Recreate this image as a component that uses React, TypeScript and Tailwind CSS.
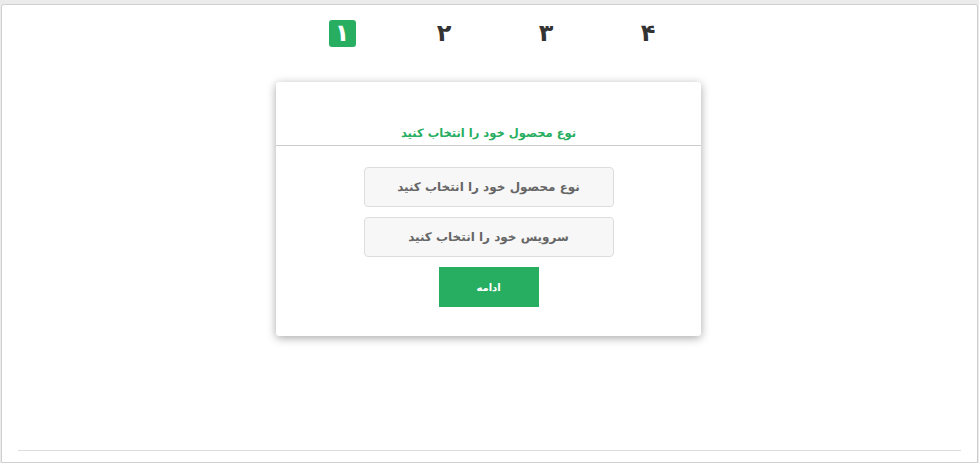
import React from 'react';

const steps = ['۱', '۲', '۳', '۴'];

const fa = { fontFamily: '"DejaVu Sans", "Noto Sans", sans-serif' };

export default function App() {
  return (
    <div className="min-h-[463px] bg-[#ebebeb] pt-1 px-px" style={fa}>
      <div className="h-[459px] bg-white border border-[#cfcfcf] rounded-t-[3px] flex flex-col">
        {/* step indicator */}
        <div className="flex justify-center pl-[11px] pt-[15px]">
          {steps.map((s, i) => (
            <div key={s} className="w-[102px] flex justify-center">
              {i === 0 ? (
                <span className="w-[27px] h-[27px] rounded-[3px] bg-[#27ae60] text-white font-bold text-[24px] leading-[27px] text-center">
                  {s}
                </span>
              ) : (
                <span className="h-[27px] text-[#333] font-bold text-[24px] leading-[27px]">{s}</span>
              )}
            </div>
          ))}
        </div>

        {/* card */}
        <div className="pr-[2px]">
          <div className="mx-auto mt-[35px] w-[425px] h-[254px] bg-white rounded-[3px] shadow-[0_2px_10px_rgba(0,0,0,0.35)]" dir="rtl">
            <div className="h-[64px] border-b border-[#cccccc] flex items-end justify-center pb-[4px]">
              <h3 className="text-[#27ae60] font-bold text-[11.5px] leading-[16px]">نوع محصول خود را انتخاب کنید</h3>
            </div>
            <div className="flex flex-col items-center gap-[10px] pt-[21px]">
              <button className="w-[250px] h-[40px] bg-[#f7f7f7] border border-[#dddddd] rounded-[4px] text-[#666] font-bold text-[12px]">
                نوع محصول خود را انتخاب کنید
              </button>
              <button className="w-[250px] h-[40px] bg-[#f7f7f7] border border-[#dddddd] rounded-[4px] text-[#666] font-bold text-[12px]">
                سرویس خود را انتخاب کنید
              </button>
              <button className="w-[100px] h-[40px] bg-[#27ae60] text-white font-bold text-[10px]">ادامه</button>
            </div>
          </div>
        </div>

        <div className="mt-auto mb-[11px] mx-[16px] border-t border-[#dddddd]" />
      </div>
    </div>
  );
}
